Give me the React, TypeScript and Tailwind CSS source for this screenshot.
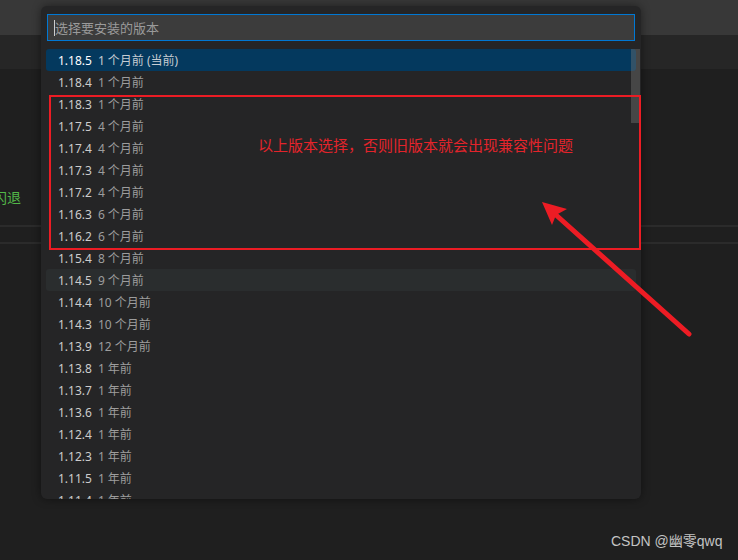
import React from "react";

const rows: [string, string][] = [
  ["1.18.5", "1 个月前 (当前)"],
  ["1.18.4", "1 个月前"],
  ["1.18.3", "1 个月前"],
  ["1.17.5", "4 个月前"],
  ["1.17.4", "4 个月前"],
  ["1.17.3", "4 个月前"],
  ["1.17.2", "4 个月前"],
  ["1.16.3", "6 个月前"],
  ["1.16.2", "6 个月前"],
  ["1.15.4", "8 个月前"],
  ["1.14.5", "9 个月前"],
  ["1.14.4", "10 个月前"],
  ["1.14.3", "10 个月前"],
  ["1.13.9", "12 个月前"],
  ["1.13.8", "1 年前"],
  ["1.13.7", "1 年前"],
  ["1.13.6", "1 年前"],
  ["1.12.4", "1 年前"],
  ["1.12.3", "1 年前"],
  ["1.11.5", "1 年前"],
  ["1.11.4", "1 年前"],
];

const uiFont = { fontFamily: '"Noto Sans", "Noto Sans CJK SC", sans-serif' };

export default function App() {
  return (
    <div
      className="relative w-[738px] h-[560px] overflow-hidden bg-[#1f1f1f]"
      style={uiFont}
    >
      {/* background editor */}
      <div className="flex flex-col w-full h-full">
        <div className="h-[35px] bg-[#383838]" />
        <div className="h-[34px] bg-[#262626]" />
        <div className="h-[121px]" />
        <div className="h-[14px] flex items-center leading-[14px] text-[14px] text-[#52b848]">
          <span className="-ml-[7px]" style={{ fontFamily: '"Noto Sans CJK SC", sans-serif' }}>闪退</span>
        </div>
        <div className="h-[21px]" />
        <div className="h-[2px] bg-[#2b2b2b]" />
        <div className="h-[15px]" />
        <div className="h-[2px] bg-[#2b2b2b]" />
      </div>

      {/* quick pick */}
      <div className="absolute left-[41px] top-[6px] w-[600px] h-[493px] rounded-[6px] bg-[#252526] shadow-[0_0_10px_rgba(0,0,0,0.45)] overflow-hidden flex flex-col">
        <div className="px-[6px] pt-[8px]">
          <div className="h-[27px] border border-[#0078d4] bg-[#3c3c3c] flex items-center pl-[6px]">
            <span className="w-px h-[16px] bg-[#cccccc]" />
            <span className="text-[13px] text-[#9a9a9a] leading-[18px]" style={{ fontFamily: '"Noto Sans CJK SC", sans-serif' }}>
              选择要安装的版本
            </span>
          </div>
        </div>
        <div className="relative mt-[8px] px-[5px] flex flex-col">
          {rows.map(([v, d], i) => {
            const selected = i === 0;
            const hover = i === 10;
            return (
              <div
                key={v}
                className={
                  "h-[22px] shrink-0 flex items-center pl-[12px] pt-[1px] rounded-[3px] text-[12px] leading-[21px] " +
                  (selected ? "bg-[#04395e]" : hover ? "bg-[#2a2d2e]" : "")
                }
              >
                <span className={selected ? "text-[#ffffff]" : "text-[#cccccc]"}>{v}</span>
                <span className={"ml-[6px] " + (selected ? "text-[#c6ccd2]" : "text-[#9d9d9d]")}>{d}</span>
              </div>
            );
          })}
          <div className="absolute right-[1px] top-0 w-[9px] h-[74px] bg-[rgba(121,121,121,0.4)]" />
        </div>
      </div>

      {/* annotation box */}
      <div className="absolute left-[49px] top-[95px] w-[592px] h-[155px] border-2 border-[#ec1c24] pl-[207px] pt-[37px]">
        <div
          className="text-[15px] leading-[22px] text-[#e3242b] whitespace-nowrap"
          style={{ fontFamily: '"Noto Sans CJK SC", sans-serif' }}
        >
          以上版本选择，否则旧版本就会出现兼容性问题
        </div>
      </div>

      {/* arrow */}
      <svg className="absolute left-0 top-0" width="738" height="560" viewBox="0 0 738 560">
        <line x1="689" y1="334" x2="556" y2="215" stroke="#ed1c24" strokeWidth="5" strokeLinecap="round" />
        <polygon points="542,202 567,209 556,215 552,225" fill="#ed1c24" />
      </svg>

      {/* watermark */}
      <div
        className="absolute left-[611px] top-[532px] text-[14px] leading-[19px] text-[#c4c4c4] whitespace-nowrap"
        style={{ fontFamily: '"Liberation Sans", "Noto Sans CJK SC", sans-serif' }}
      >
        CSDN @幽零qwq
      </div>
    </div>
  );
}
